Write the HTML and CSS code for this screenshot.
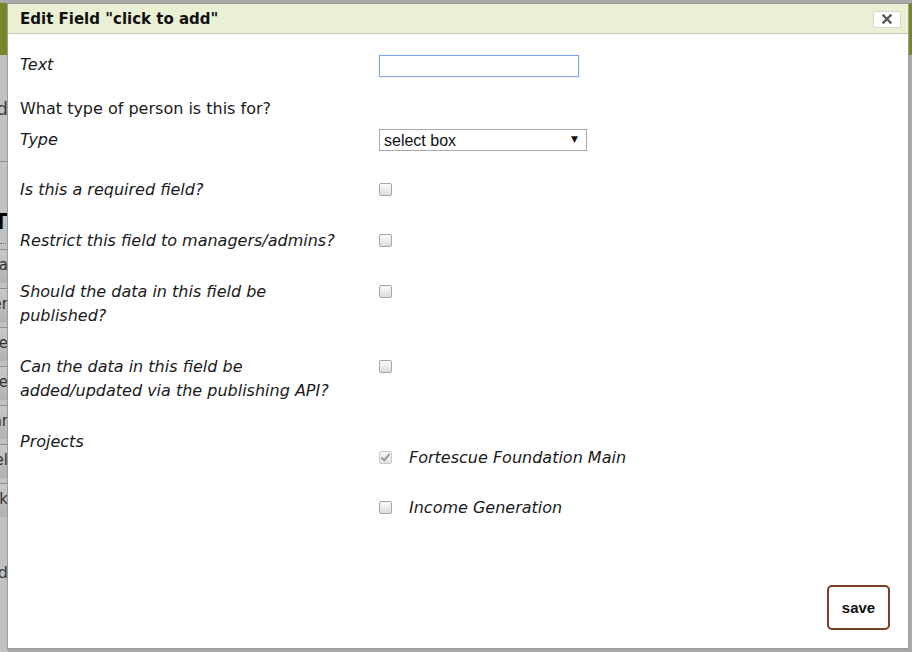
FILE: index.html
```html
<!DOCTYPE html>
<html>
<head>
<meta charset="utf-8">
<link rel="stylesheet" href="styles.css">
</head>
<body>
<div class="page">
  <div class="page-top"></div>
  <div class="page-left">
    <div class="frag f-d1">d</div>
    <div class="frag f-line"></div>
    <div class="frag f-T">T</div>
    <div class="frag f-dot"></div>
    <div class="frag f-row">a</div>
    <div class="frag f-row">er</div>
    <div class="frag f-row">e</div>
    <div class="frag f-row">e</div>
    <div class="frag f-row">ar</div>
    <div class="frag f-row">el</div>
    <div class="frag f-row">k</div>
    <div class="frag f-d2">d</div>
  </div>
</div>

<div class="dialog">
  <div class="titlebar">
    <span class="title">Edit Field "click to add"</span>
    <button class="close" type="button" aria-label="close"><svg width="10" height="10" viewBox="0 0 10 10"><path d="M1.5 1.5 L8.5 8.5 M8.5 1.5 L1.5 8.5" stroke="#5a5a5a" stroke-width="2.4" stroke-linecap="square" fill="none"/></svg></button>
  </div>
  <div class="body">
    <div class="row r-text">
      <label class="lbl">Text</label>
      <div class="ctl"><input class="txt" type="text" autofocus></div>
    </div>
    <div class="question">What type of person is this for?</div>
    <div class="row r-type">
      <label class="lbl">Type</label>
      <div class="ctl">
        <span class="sel-wrap">
          <select class="sel"><option>select box</option></select>
          <span class="arrow">&#9660;</span>
        </span>
      </div>
    </div>
    <div class="row r-check">
      <label class="lbl">Is this a required field?</label>
      <div class="ctl"><input type="checkbox" class="cb"></div>
    </div>
    <div class="row r-check">
      <label class="lbl">Restrict this field to managers/admins?</label>
      <div class="ctl"><input type="checkbox" class="cb"></div>
    </div>
    <div class="row r-check">
      <label class="lbl">Should the data in this field be<br>published?</label>
      <div class="ctl"><input type="checkbox" class="cb"></div>
    </div>
    <div class="row r-check">
      <label class="lbl">Can the data in this field be<br>added/updated via the publishing API?</label>
      <div class="ctl"><input type="checkbox" class="cb"></div>
    </div>
    <div class="row r-projects">
      <label class="lbl">Projects</label>
      <div class="ctl projects">
        <div class="proj"><input type="checkbox" class="cb" checked disabled><span class="plbl">Fortescue Foundation Main</span></div>
        <div class="proj"><input type="checkbox" class="cb"><span class="plbl">Income Generation</span></div>
      </div>
    </div>
  </div>
  <div class="footer">
    <button class="save" type="button">save</button>
  </div>
</div>
</body>
</html>
```
FILE: styles.css
```css
html, body {
  margin: 0;
  padding: 0;
  width: 912px;
  height: 652px;
  overflow: hidden;
}
body {
  background: #a9a9a9;
  font-family: "DejaVu Sans", Verdana, sans-serif;
}
.page {
  position: relative;
  width: 912px;
  height: 652px;
}
.page-top {
  height: 52px;
  margin-top: 3px;
  background: #76872a;
}
.page-left {
  width: 8px;
  overflow: hidden;
  background: #c2c2c2;
  display: flex;
  flex-direction: column;
  align-items: flex-end;
  height: 597px;
}
.frag {
  font-size: 18px;
  color: #3a3a3a;
  line-height: 20px;
  white-space: nowrap;
}
.f-d1 { margin-top: 44px; }
.f-line { margin-top: 42px; width: 8px; border-top: 1px solid #8a8a8a; height: 0; }
.f-T { margin-top: 50px; font-weight: bold; color: #000; font-size: 22px; }
.f-dot { margin-top: 11px; width: 8px; border-top: 1px dotted #777; height: 0; }
.f-row {
  width: 20px;
  text-align: right;
  font-size: 15px;
  height: 33px;
  line-height: 30px;
  border-top: 1px solid #8c8c8c;
  background: linear-gradient(#c8c8c8, #b2b2b2);
  color: #333;
  margin-top: 5px;
}
.f-row:first-of-type { margin-top: 24px; }
.f-d2 { margin-top: 46px; font-size: 16px; }

.dialog {
  position: fixed;
  left: 7px;
  top: 3px;
  width: 900px;
  height: 644px;
  border: 1px solid #9d9d9d;
  border-bottom-width: 2px;
  background: #fff;
  display: flex;
  flex-direction: column;
  box-sizing: content-box;
}
.titlebar {
  height: 29px;
  background: #e9f0d3;
  border-bottom: 1px solid #c6c6c0;
  display: flex;
  align-items: center;
  justify-content: space-between;
  padding: 0 7px 0 12px;
}
.title {
  font-weight: bold;
  font-size: 15px;
  color: #111;
}
.close {
  width: 28px;
  height: 17px;
  background: #fff;
  border: 1px solid #d6d6d6;
  border-radius: 2px;
  padding: 0;
  margin-top: 1px;
  display: flex;
  align-items: center;
  justify-content: center;
}
.close svg { display: block; }
.body {
  flex: 1;
  padding: 19px 12px 0 12px;
  color: #1a1a1a;
  font-size: 16px;
}
.row {
  display: flex;
  align-items: flex-start;
}
.lbl {
  width: 359px;
  font-style: italic;
  line-height: 24px;
  flex: none;
}
.ctl {
  flex: 1;
}
.r-text { height: 44px; }
.txt {
  width: 200px;
  height: 22px;
  box-sizing: border-box;
  border: 1px solid #7fa6e2;
  outline: none;
  margin: 2px 0 0 0;
  padding: 0 3px;
  font-family: "Liberation Sans", Arial, sans-serif;
  font-size: 14px;
  box-shadow: 0 0 1px #a8c5f0;
}
.question {
  line-height: 24px;
  height: 31px;
}
.r-type { height: 50px; }
.sel-wrap {
  position: relative;
  display: inline-block;
  margin-top: 1px;
}
.sel {
  appearance: none;
  -webkit-appearance: none;
  width: 208px;
  height: 22px;
  border: 1px solid #a9a9a9;
  background: #fff;
  font-family: "Liberation Sans", Arial, sans-serif;
  font-size: 16px;
  color: #111;
  padding: 0 0 0 4px;
  border-radius: 0;
  margin: 0;
  display: block;
}
.arrow {
  position: absolute;
  right: 9px;
  top: 5px;
  font-size: 9px;
  color: #111;
  pointer-events: none;
}
.r-check { margin-bottom: 27px; }
.cb {
  appearance: none;
  -webkit-appearance: none;
  position: relative;
  width: 13px;
  height: 13px;
  margin: 5px 0 0 0;
  border: 1px solid #a6a6a6;
  border-radius: 2px;
  background: linear-gradient(#fbfbfb, #dcdcdc);
  box-sizing: border-box;
}
.cb:checked::after {
  content: "";
  position: absolute;
  left: 3px;
  top: 0px;
  width: 3px;
  height: 7px;
  border: solid #9a9a9a;
  border-width: 0 2px 2px 0;
  transform: rotate(40deg);
}
.cb:disabled {
  border-color: #c8c8c8;
  background: linear-gradient(#f6f6f6, #e6e6e6);
}
.projects {
  padding-top: 14px;
}
.proj {
  display: flex;
  align-items: center;
  height: 26px;
  margin-bottom: 24px;
}
.proj .cb { margin: 0; }
.plbl {
  font-style: italic;
  margin-left: 17px;
}
.footer {
  display: flex;
  justify-content: flex-end;
  padding: 0 18px 18px 0;
}
.save {
  width: 63px;
  height: 45px;
  background: #fff;
  border: 2px solid #7a3e22;
  border-radius: 5px;
  font-family: "Liberation Sans", Arial, sans-serif;
  font-weight: bold;
  font-size: 15px;
  color: #111;
  padding: 0;
}
```
